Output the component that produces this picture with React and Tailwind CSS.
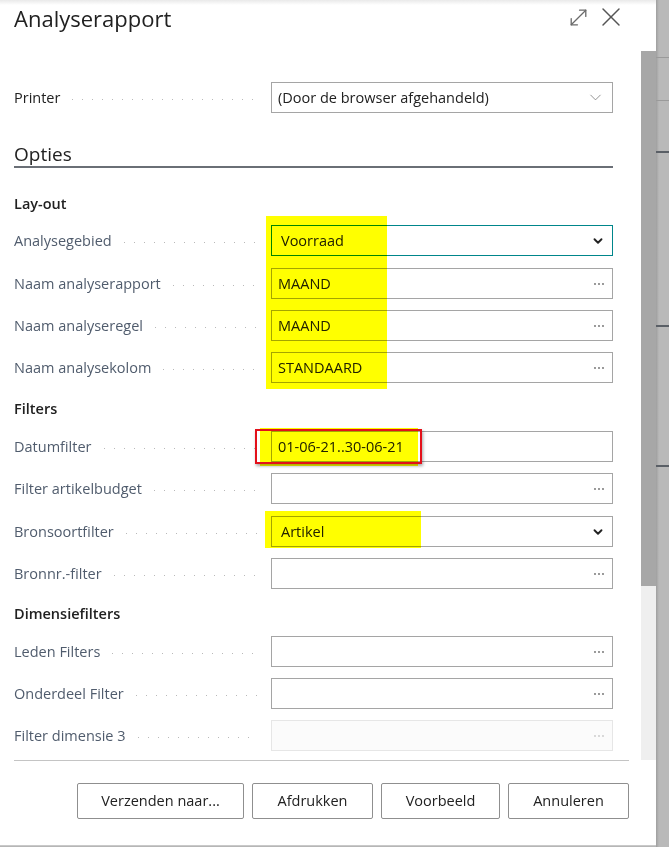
import React from "react";
import { MoveDiagonal, X, ChevronDown } from "lucide-react";

const font = { fontFamily: '"Open Sans", "Noto Sans", sans-serif' };

const Ellipsis = ({ disabled }) => (
  <svg width="12" height="4" viewBox="0 0 12 4" className="mr-[7px]">
    <circle cx="2" cy="2" r="0.9" fill={disabled ? "#c8c8c8" : "#6b6b6b"} />
    <circle cx="6" cy="2" r="0.9" fill={disabled ? "#c8c8c8" : "#6b6b6b"} />
    <circle cx="10" cy="2" r="0.9" fill={disabled ? "#c8c8c8" : "#6b6b6b"} />
  </svg>
);

const Field = ({ label, value, kind = "lookup", mt = "", dark, focus, disabled, indent }) => (
  <div className={`flex items-center h-[31px] ${mt}`}>
    <div className="w-[257px] pr-[13px] flex items-center">
      <span className={`text-[14.5px] whitespace-nowrap ${dark ? "text-[#212121]" : "text-[#505c6d]"}`}>{label}</span>
      <span className="flex-1 ml-[12px] mt-[4px] h-px bg-[linear-gradient(to_right,#b9b9b9_1px,transparent_1px)] bg-[length:10px_1px] bg-repeat-x" />
    </div>
    <div
      className={`flex-1 h-full flex items-center justify-between border ${
        focus ? "border-[#00868b]" : disabled ? "border-[#e6e6e6] bg-[#fbfbfb]" : "border-[#a5a5a5]"
      }`}
    >
      <span className={`text-[14.5px] text-[#212121] whitespace-nowrap ${indent ? "pl-[9px]" : "pl-[6px]"}`}>{value}</span>
      {kind === "lookup" && <Ellipsis disabled={disabled} />}
      {kind === "select" && <ChevronDown size={19} strokeWidth={1} className="mr-[7px] text-[#777]" />}
      {kind === "bold" && <ChevronDown size={14} strokeWidth={3.2} className="mr-[7px] text-[#222]" />}
    </div>
  </div>
);

const Heading = ({ children, mt }) => (
  <div className={`h-[20px] leading-[20px] text-[14.5px] font-semibold text-[#212121] ${mt}`}>{children}</div>
);

export default function App() {
  return (
    <div className="w-[669px] h-[847px] flex bg-[#b6b6b6] overflow-hidden" style={font}>
      <div className="w-[656px] h-[846px] bg-white flex flex-col border-b border-[#c9c9c9]">
        {/* header */}
        <div className="h-[51px] flex items-start justify-between pl-[14px] pr-[29px] bg-[linear-gradient(to_bottom,#e9e9e9,#ffffff_5px)]">
          <h1 className="text-[22px] leading-[32px] pt-[2px] text-[#212121]">Analyserapport</h1>
          <div className="flex items-center gap-[4px] pt-[1px]">
            <MoveDiagonal size={25} strokeWidth={1.25} className="text-[#6a6a6a]" />
            <X size={32} strokeWidth={1.1} className="text-[#555]" />
          </div>
        </div>

        {/* body */}
        <div className="h-[709px] flex">
          <div className="relative flex-1 overflow-hidden pl-[14px] pr-[28px] pt-[31px]">
            <Field label="Printer" value="(Door de browser afgehandeld)" kind="select" dark />

            <div className="mt-[28px] h-[27px] leading-[27px] text-[19px] text-[#212121] border-b-2 border-[#6a6f76]">Opties</div>

            <Heading mt="mt-[26px]">Lay-out</Heading>
            <Field label="Analysegebied" value="Voorraad" kind="bold" focus indent mt="mt-[11px]" />
            <Field label="Naam analyserapport" value="MAAND" mt="mt-[12px]" />
            <Field label="Naam analyseregel" value="MAAND" mt="mt-[11px]" />
            <Field label="Naam analysekolom" value="STANDAARD" mt="mt-[11px]" />

            <Heading mt="mt-[16px]">Filters</Heading>
            <Field label="Datumfilter" value="01-06-21..30-06-21" kind="none" mt="mt-[12px]" />
            <Field label="Filter artikelbudget" value="" mt="mt-[11px]" />
            <Field label="Bronsoortfilter" value="Artikel" kind="bold" indent mt="mt-[12px]" />
            <Field label="Bronnr.-filter" value="" mt="mt-[11px]" />

            <Heading mt="mt-[15px]">Dimensiefilters</Heading>
            <Field label="Leden Filters" value="" mt="mt-[12px]" />
            <Field label="Onderdeel Filter" value="" mt="mt-[11px]" />
            <Field label="Filter dimensie 3" value="" disabled mt="mt-[11px]" />

            {/* highlighter marks */}
            <div className="absolute left-[266px] top-[165px] w-[121px] h-[173px] bg-[#ffff00] mix-blend-multiply" />
            <div className="absolute left-[260px] top-[377px] w-[158px] h-[38px] bg-[#ffff00] mix-blend-multiply" />
            <div className="absolute left-[255px] top-[378px] w-[167px] h-[35px] border-2 border-[#e3101a] shadow-[1px_2px_3px_rgba(0,0,0,0.35)]" />
            <div className="absolute left-[265px] top-[460px] w-[156px] h-[37px] bg-[#ffff00] mix-blend-multiply" />
          </div>
          {/* scrollbar */}
          <div className="w-[15px] flex flex-col">
            <div className="h-[535px] bg-[#a7a7a7]" />
            <div className="flex-1 bg-[#efefef]" />
          </div>
        </div>

        {/* footer */}
        <div className="flex-1 pl-[14px] pr-[27px]">
          <div className="border-t border-[#c4c4c4] pt-[22px] flex justify-end gap-[8px]">
            {["Verzenden naar...", "Afdrukken", "Voorbeeld", "Annuleren"].map((b, i) => (
              <button
                key={b}
                className={`h-[36px] border border-[#8f8f8f] rounded-[2px] bg-white text-[14.5px] text-[#212121] ${
                  i === 0 ? "w-[167px]" : i === 2 ? "w-[119px]" : "w-[121px]"
                }`}
              >
                {b}
              </button>
            ))}
          </div>
        </div>
      </div>

      {/* page behind the dialog */}
      <div className="flex-1 flex flex-col bg-[linear-gradient(to_right,#9f9f9f,#b9b9b9_3px)]">
        <div className="h-[57px]" />
        <div className="h-px bg-[#9a9a9a]" />
        <div className="h-[42px]" />
        <div className="h-px bg-[#9a9a9a]" />
        <div className="h-[50px]" />
        <div className="h-[2px] bg-[#5a5f66]" />
        <div className="h-[172px]" />
        <div className="h-[2px] bg-[#5a5f66]" />
        <div className="h-[138px]" />
        <div className="h-[2px] bg-[#5a5f66]" />
      </div>
    </div>
  );
}
